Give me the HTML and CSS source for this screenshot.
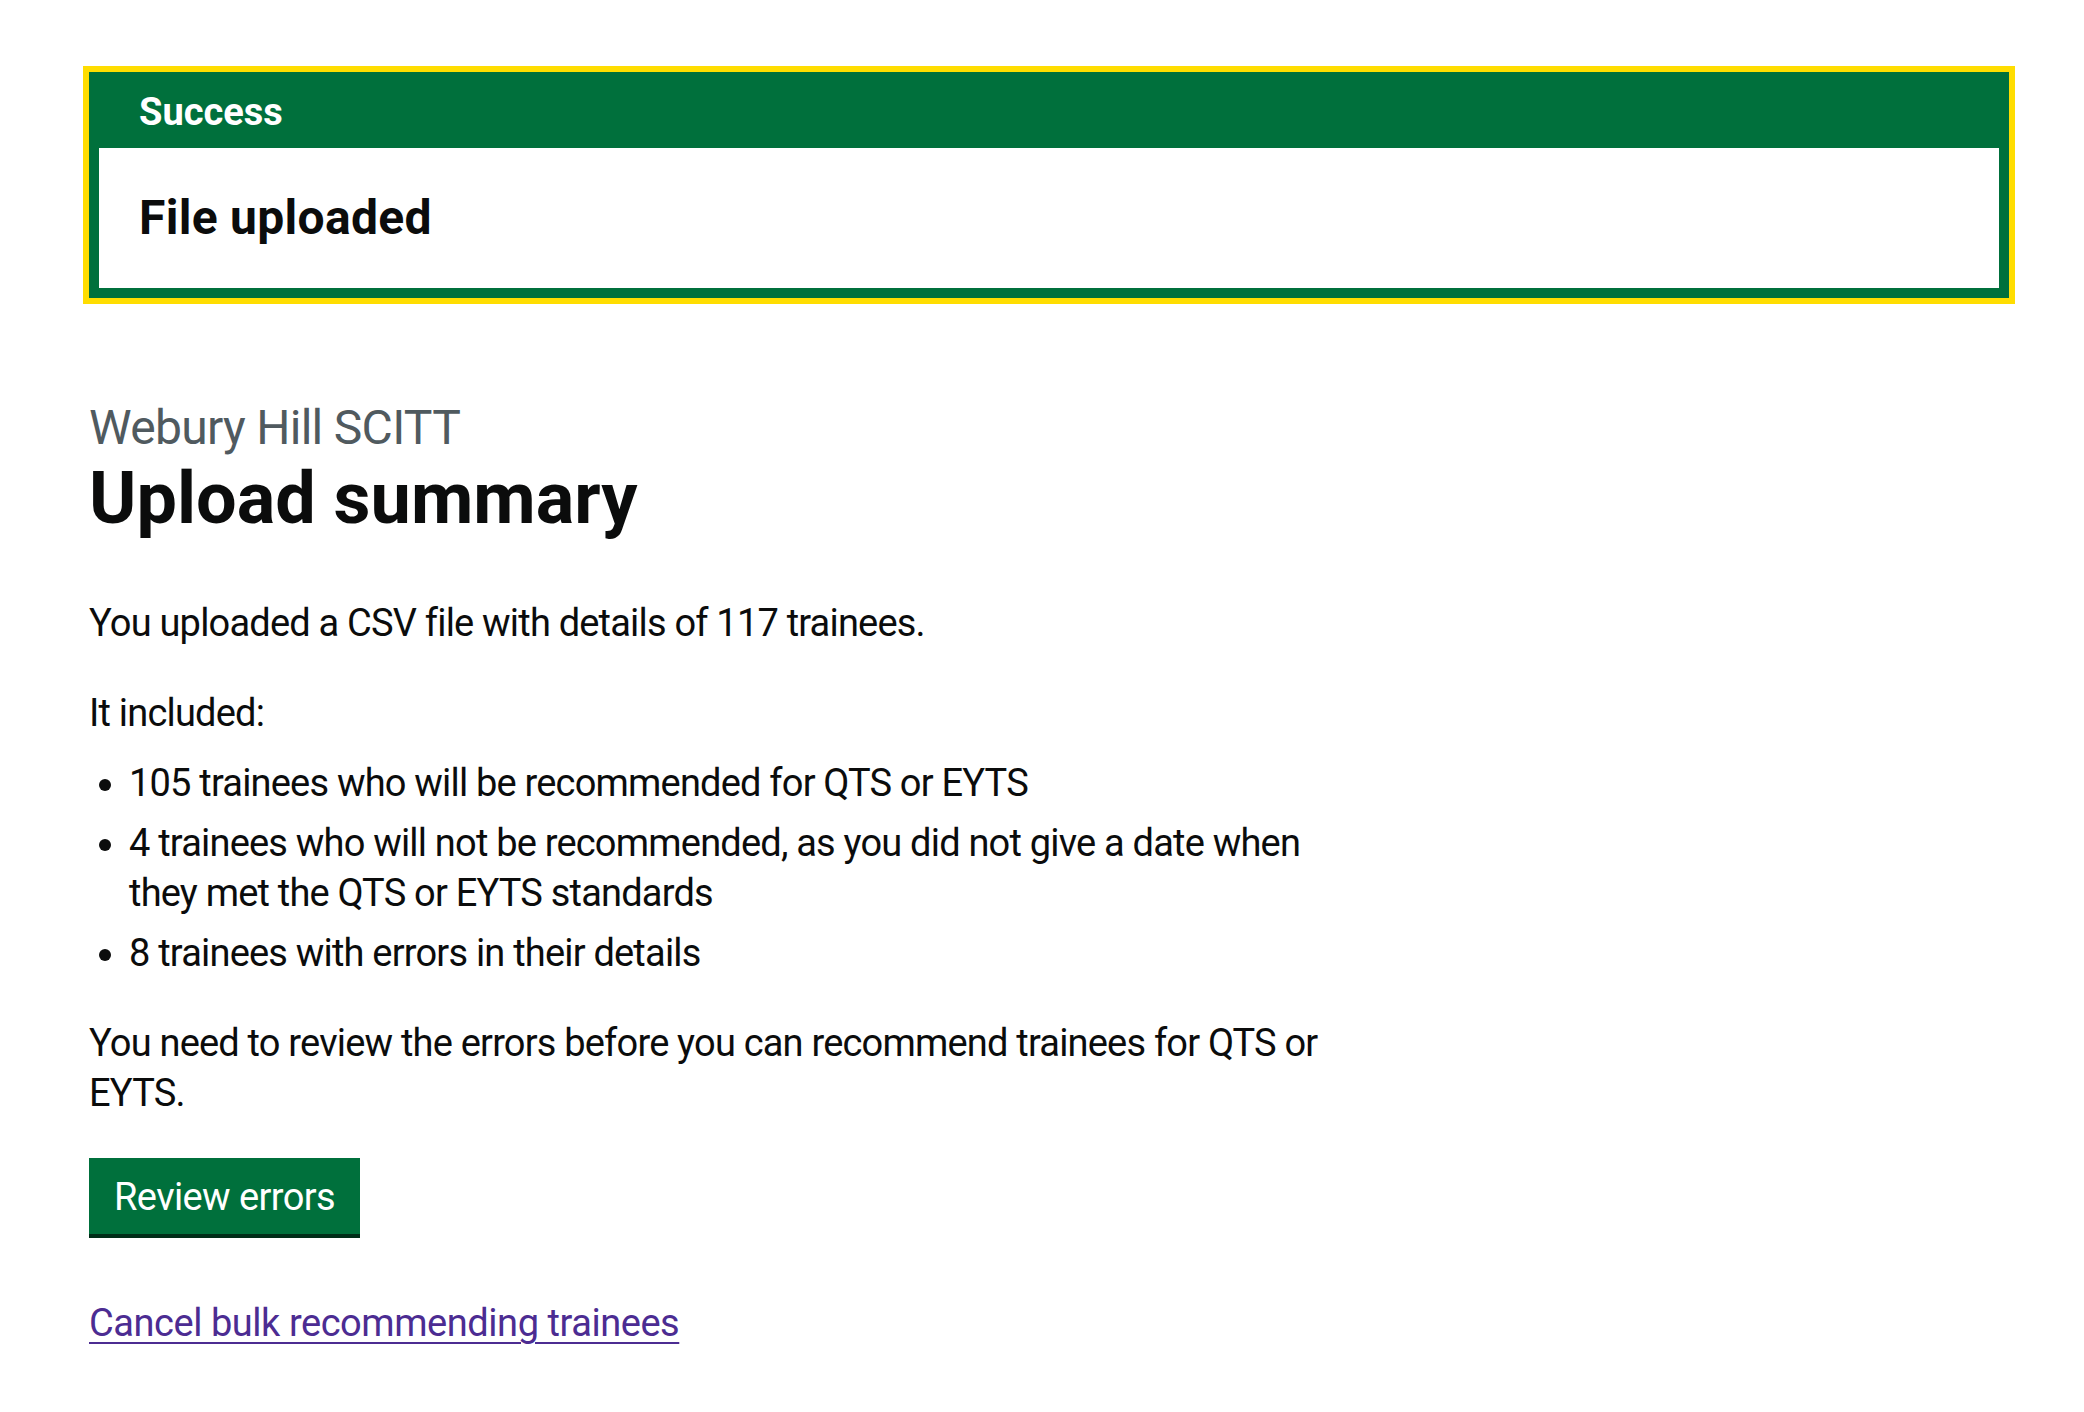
FILE: index.html
```html
<!DOCTYPE html>
<html lang="en">
<head>
<meta charset="utf-8">
<title>Upload summary</title>
<link rel="stylesheet" href="styles.css">
</head>
<body>
<div class="page">
  <div class="banner" role="alert">
    <div class="banner-header"><h2 class="banner-title">Success</h2></div>
    <div class="banner-content"><h3 class="banner-heading">File uploaded</h3></div>
  </div>
  <div class="column">
    <span class="caption">Webury Hill SCITT</span>
    <h1 class="heading">Upload summary</h1>
    <p class="body">You uploaded a CSV file with details of 117 trainees.</p>
    <p class="body tight">It included:</p>
    <ul class="list">
      <li>105 trainees who will be recommended for QTS or EYTS</li>
      <li>4 trainees who will not be recommended, as you did not give a date when they met the QTS or EYTS standards</li>
      <li>8 trainees with errors in their details</li>
    </ul>
    <p class="body">You need to review the errors before you can recommend trainees for QTS or EYTS.</p>
    <a class="button" href="#">Review errors</a>
    <p class="body"><a class="link" href="#">Cancel bulk recommending trainees</a></p>
  </div>
</div>
</body>
</html>
```
FILE: styles.css
```css
html, body { margin: 0; padding: 0; background: #fff; }
body { font-family: Roboto, "Liberation Sans", sans-serif; color: #0b0c0c; }
.page { padding: 72px 0 0 89px; width: 1920px; }
.banner { border: 10px solid #00703c; background: #00703c; outline: 6px solid #ffdd00; margin-bottom: 100px; }
.banner-header { padding: 5px 40px 11px; }
.banner-title { margin: 0; font-size: 38px; line-height: 50px; font-weight: 700; color: #fff; }
.banner-content { background: #fff; padding: 40px; }
.banner-heading { margin: 0; font-size: 48px; line-height: 60px; font-weight: 700; letter-spacing: 0.3px; }
.column { width: 1260px; }
.caption { display: block; font-size: 48px; line-height: 60px; letter-spacing: -0.7px; color: #505a5f; margin-bottom: 1px; }
.heading { margin: 0 0 59px; font-size: 72px; line-height: 80px; font-weight: 700; }
.body { margin: 0 0 40px; font-size: 38px; line-height: 50px; letter-spacing: -0.8px; }
.tight { margin-bottom: 20px; }
.list { margin: 0 0 40px; padding-left: 40px; font-size: 38px; line-height: 50px; letter-spacing: -0.8px; }
.list li { margin-bottom: 10px; }
.button { display: inline-block; background: #00703c; color: #fff; font-size: 38px; line-height: 38px; letter-spacing: -0.6px; padding: 16px 21px 14px; border: 4px solid transparent; box-shadow: 0 4px 0 #002d18; margin-bottom: 64px; text-decoration: none; }
.link { color: #4c2c92; letter-spacing: -0.45px; text-decoration: underline; text-decoration-thickness: 2px; text-underline-offset: 6px; }
```
